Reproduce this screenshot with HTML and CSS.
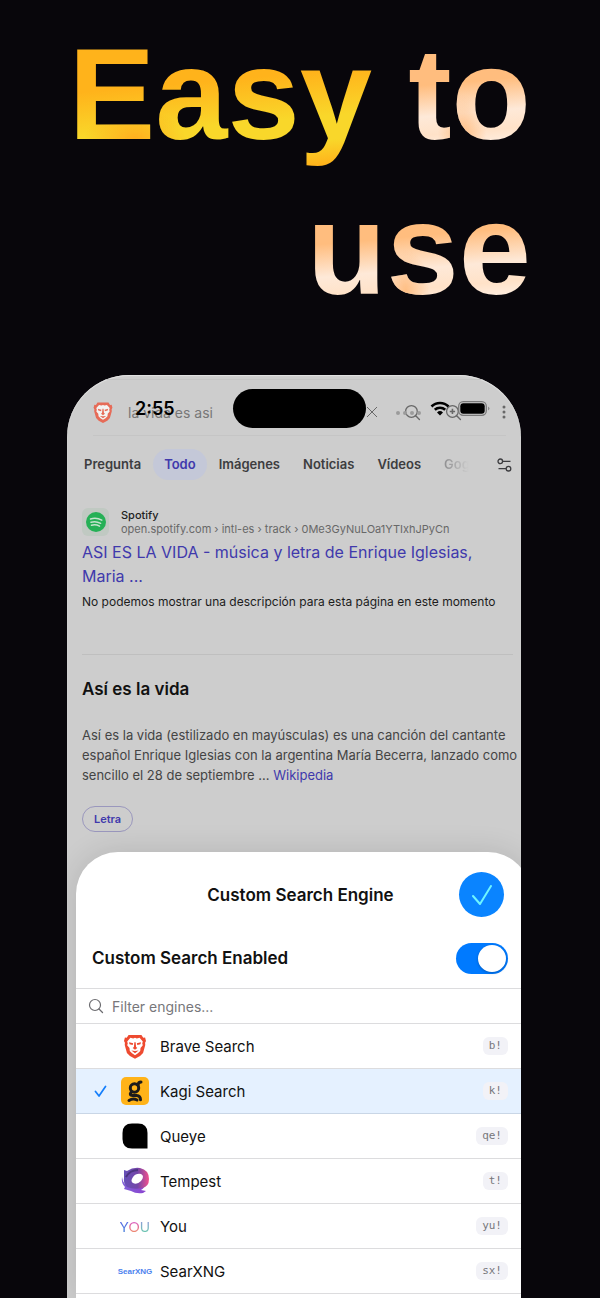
FILE: index.html
```
<!DOCTYPE html>
<html lang="es">

<head>
  <meta charset="UTF-8">
  <meta name="viewport" content="width=device-width, initial-scale=1.0">
  <title>Easy to use</title>
  <link rel="stylesheet" href="styles.css">
</head>

<body>
  <svg class="sprite" width="0" height="0" aria-hidden="true">
    <symbol id="brave" viewBox="0 0 24 28">
      <path fill="#ee4a30" d="M5 2h14l2 3 2-.3 1 3.8-1 2 .2 2.500-2.400 8.500-3.300 3.500L12 28l-5.500-3-3.300-3.500L.8 13 1 10.500 0 8.500l1-3.800L3 5z" />
      <path fill="#fff" d="M7 5l3 .7L12 5l2 .7L17 5l3.500 4-.6 2.300.6 2-2.500 3-.3 3.200-2.500 2.300L12 24l-3.200-2.200-2.500-2.300L6 16.300l-2.500-3 .6-2L3.500 9z" />
      <path fill="#ee4a30" d="M5.500 10l4.500 1-.5 2-3.500-1zM18.500 10L14 11l.5 2 3.500-1zM11.300 10h1.400l.5 5 1.300 1.200L12 18l-2.500-1.800 1.300-1.200zM8 19l4 .5 4-.5-4 3z" />
    </symbol>
    <symbol id="search" viewBox="0 0 16 16">
      <circle cx="7" cy="7" r="5.500" fill="none" stroke="currentColor" stroke-width="1.200" />
      <path d="M11 11l3.500 3.500" stroke="currentColor" stroke-width="1.300" stroke-linecap="round" />
    </symbol>
  </svg>

  <h1 class="headline"><span class="gold">Easy</span> <span class="peach">to</span> <span class="peach">use</span></h1>

  <main class="phone">
    <div class="status-bar">
      <span class="time">2:55</span>
      <span class="island"></span>
      <span class="indicators">
        <span class="signal"><i></i><i></i><i></i><i></i></span>
        <svg class="wifi" viewBox="0 0 20 15">
          <path d="M1.500 5.500a12 12 0 0 1 17 0M4.800 8.800a7.500 7.500 0 0 1 10.400 0" fill="none" stroke="#000" stroke-width="2.600" />
          <path d="M7 11.500a4.300 4.300 0 0 1 6 0l-3 3z" />
        </svg>
        <svg class="battery" viewBox="0 0 32 15">
          <rect x=".7" y=".7" width="27.600" height="13.600" rx="4.500" fill="none" stroke="#7a7a7a" stroke-width="1.300" />
          <rect x="2.300" y="2.300" width="24.400" height="10.400" rx="3" />
          <path d="M30 5.500v4q1.500-.8 1.500-2t-1.500-2z" fill="#8c8c8c" />
        </svg>
      </span>
    </div>

    <form class="search-bar" role="search">
      <svg class="lion"><use href="#brave" /></svg>
      <input type="text" value="la vida es asi" aria-label="Buscar">
      <button type="reset" class="clear" aria-label="Borrar"><svg viewBox="0 0 12 12"><path d="M1 1l10 10M11 1L1 11" stroke="currentColor" /></svg></button>
      <button type="submit" class="tool" aria-label="Buscar"><svg><use href="#search" /></svg></button>
      <button type="button" class="tool ask" aria-label="Preguntar"><svg viewBox="0 0 16 16"><use href="#search" /><path d="M7 4.500v5M4.500 7h5" stroke="currentColor" stroke-width="1.500" /></svg></button>
      <button type="button" class="more" aria-label="Más"><svg viewBox="0 0 4 14" fill="currentColor"><circle cx="2" cy="2" r="1.500" /><circle cx="2" cy="7" r="1.500" /><circle cx="2" cy="12" r="1.500" /></svg></button>
    </form>

    <nav class="tabs">
      <div class="tab-list">
        <a href="#">Pregunta</a>
        <a href="#" class="active">Todo</a>
        <a href="#">Imágenes</a>
        <a href="#">Noticias</a>
        <a href="#">Vídeos</a>
        <a href="#" class="last">Gog</a>
      </div>
      <button type="button" class="filters" aria-label="Filtros"><svg viewBox="0 0 15 14" fill="none" stroke="currentColor" stroke-width="1.300"><circle cx="3.300" cy="3.300" r="2.300" /><path d="M6 3.300h7.500M1.500 10.700H9" /><circle cx="11.500" cy="10.700" r="2.300" /></svg></button>
    </nav>

    <article class="result">
      <div class="site">
        <span class="favicon">
          <svg viewBox="0 0 20 20"><circle cx="10" cy="10" r="10" fill="#25b056" /><path d="M4.500 7q6-1.800 11.300 1.200M5 10.200q5-1.400 9.600 1.100M5.500 13.200q4.300-1.100 8 .9" fill="none" stroke="#c5e2cd" stroke-width="1.500" stroke-linecap="round" /></svg>
        </span>
        <div>
          <div class="site-name">Spotify</div>
          <div class="site-url">open.spotify.com › intl-es › track › 0Me3GyNuLOa1YTIxhJPyCn</div>
        </div>
      </div>
      <a href="#" class="result-title">ASI ES LA VIDA - música y letra de Enrique Iglesias, Maria ...</a>
      <p class="result-text">No podemos mostrar una descripción para esta página en este momento</p>
    </article>

    <section class="infobox">
      <h2>Así es la vida</h2>
      <p>Así es la vida (estilizado en mayúsculas) es una canción del cantante español Enrique Iglesias con la argentina María Becerra, lanzado como sencillo el 28 de septiembre ... <a href="#">Wikipedia</a></p>
      <button type="button" class="chip">Letra</button>
    </section>

    <section class="sheet">
      <header class="sheet-header">
        <h2>Custom Search Engine</h2>
        <button type="button" class="done" aria-label="Done"><svg viewBox="0 0 20 20"><path d="M1 11l7 8L19 1" fill="none" stroke="#6ff5ff" stroke-width="2" stroke-linecap="round" stroke-linejoin="round" /></svg></button>
      </header>
      <div class="toggle-row">
        <label for="enabled">Custom Search Enabled</label>
        <input type="checkbox" id="enabled" class="switch" checked>
      </div>
      <div class="filter-row">
        <svg><use href="#search" /></svg>
        <input type="text" placeholder="Filter engines..." aria-label="Filter engines">
      </div>
      <ul class="engines">
        <li>
          <span class="check"></span>
          <span class="logo"><svg class="logo-brave"><use href="#brave" /></svg></span>
          <span class="name">Brave Search</span>
          <kbd>b!</kbd>
        </li>
        <li class="selected">
          <span class="check"><svg viewBox="0 0 12 12"><path d="M1 6.500L4.500 11 11 1.500" fill="none" stroke="#147efb" stroke-width="1.700" stroke-linecap="round" stroke-linejoin="round" /></svg></span>
          <span class="logo"><svg viewBox="0 0 28 28"><rect width="28" height="28" rx="5" fill="#ffb319" /><g fill="none" stroke="#1d1a1b" stroke-width="3" stroke-linecap="round"><circle cx="13.500" cy="11" r="4.200" /><path d="M17 8q.3-3 3-3M10 15.500q-2 2.700 1.500 3h4q4 .5 4 4.300M8 23.500q4-2.500 8-.5" /></g></svg></span>
          <span class="name">Kagi Search</span>
          <kbd>k!</kbd>
        </li>
        <li>
          <span class="check"></span>
          <span class="logo"><svg viewBox="0 0 28 28"><path d="M11 1.500h6Q26.500 1.500 26.500 11v15.500H11Q1.500 26.500 1.500 17v-6Q1.500 1.500 11 1.500z" /></svg></span>
          <span class="name">Queye</span>
          <kbd>qe!</kbd>
        </li>
        <li>
          <span class="check"></span>
          <span class="logo">
            <svg viewBox="0 0 28 28">
              <defs>
                <linearGradient id="swirl" x1="0" x2="1"><stop offset="0" stop-color="#6650b8" /><stop offset=".55" stop-color="#7446a8" /><stop offset="1" stop-color="#f2508d" /></linearGradient>
                <linearGradient id="tail" x1="0" x2="1"><stop offset="0" stop-color="#8060d8" /><stop offset="1" stop-color="#8b43cf" /></linearGradient>
              </defs>
              <path fill="url(#tail)" d="M1 10q1 8 8 10 9 2 16-5-1 6-5 8l5 1-3 2q-7 1-12-2l-7-2 1-2q-4-4-3-10z" />
              <path fill="url(#swirl)" fill-rule="evenodd" d="M3 3l3 1q6-4 13-3 9 2 9 11 0 8-7 9-8 2-15-1-4-4-3-9zM20 7q-5-1-8 3-3 4 0 6 4 2 8-2 4-5 0-7z" />
              <path d="M5 10q4-7 12-7" fill="none" stroke="#4b347f" stroke-width="2" />
            </svg>
          </span>
          <span class="name">Tempest</span>
          <kbd>t!</kbd>
        </li>
        <li>
          <span class="check"></span>
          <span class="logo logo-you"><span>Y</span><span>O</span><span>U</span></span>
          <span class="name">You</span>
          <kbd>yu!</kbd>
        </li>
        <li>
          <span class="check"></span>
          <span class="logo logo-searx">SearXNG</span>
          <span class="name">SearXNG</span>
          <kbd>sx!</kbd>
        </li>
      </ul>
    </section>
  </main>
</body>

</html>
```
FILE: styles.css
```
* {
  box-sizing: border-box;
}

body {
  margin: 0;
  min-height: 100vh;
  display: flex;
  flex-direction: column;
  background: #08060b;
  font-family: Inter, "Liberation Sans", sans-serif;
  color: #111;
}

h1,
h2,
p,
ul {
  margin: 0;
  padding: 0;
}

a {
  color: #4039ac;
  text-decoration: none;
}

button {
  border: 0;
  padding: 0;
  background: none;
  color: inherit;
  font-family: inherit;
  display: flex;
  align-items: center;
  justify-content: center;
  cursor: pointer;
}

input {
  border: 0;
  padding: 0;
  background: none;
  font-family: inherit;
  min-width: 0;
}

input:focus {
  outline: none;
}

.sprite {
  position: absolute;
}

/* headline */

.headline {
  padding: 17px 69px 0 60px;
  font: bold 130px/155px "Liberation Sans", Arial, sans-serif;
  text-align: right;
}

.gold,
.peach {
  -webkit-background-clip: text;
  background-clip: text;
  color: transparent;
}

.gold {
  background-image:
    radial-gradient(ellipse 50px 30px at 66px 118px, #ffae1f, transparent),
    linear-gradient(175deg, #ffb31b 42%, #f9d72a 68%, #f9d72a 82%, #ffb31b 96%);
}

.peach {
  background-image:
    radial-gradient(ellipse 24px 40px at 44% 114px, #ffbf85, transparent),
    linear-gradient(175deg, #ffbd7e 42%, #fee9d8 62%, #ffe2c8 74%, #fff0e4 84%);
}

/* phone */

.phone {
  position: relative;
  flex: 1;
  display: flex;
  flex-direction: column;
  margin: 48px 79px 0 67px;
  padding-top: 4px;
  border-radius: 62px 62px 0 0;
  background: #cdcdcd;
  box-shadow: inset 0 1px 1px #e4e4e4;
  overflow: hidden;
}

.status-bar {
  position: absolute;
  top: 14px;
  left: 0;
  right: 0;
  z-index: 1;
  height: 39px;
  display: flex;
  align-items: center;
  justify-content: space-between;
  padding: 0 31px 0 68px;
}

.time {
  width: 98px;
  font-size: 18px;
  font-weight: 600;
  color: #000;
}

.island {
  width: 133px;
  height: 39px;
  border-radius: 20px;
  background: #000;
}

.indicators {
  flex: 1;
  display: flex;
  align-items: center;
  justify-content: flex-end;
}

.signal {
  display: flex;
  gap: 3px;
  padding: 8px 9px 0 0;
}

.signal i {
  width: 4px;
  height: 4px;
  border-radius: 2px;
  background: #9b9b9b;
}

.wifi {
  width: 20px;
  height: 15px;
  margin-right: 8px;
}

.battery {
  width: 32px;
  height: 15px;
}

.search-bar {
  display: flex;
  align-items: center;
  height: 57px;
  margin: 0 15px 0 26px;
  padding-top: 9px;
  border-top: 1px solid #c5c5c5;
  border-bottom: 1px solid #c5c5c5;
  color: #686868;
}

.search-bar input {
  flex: 1;
  margin-left: 15px;
  font-size: 14px;
  color: #777;
}

.lion {
  width: 20px;
  height: 22px;
  opacity: 0.75;
}

.clear svg {
  width: 12px;
  height: 12px;
}

.clear {
  margin-right: 26px;
}

.tool {
  margin-right: 24px;
}

.tool svg {
  width: 17px;
  height: 17px;
}

.ask {
  margin-right: 40px;
}

.more svg {
  width: 4px;
  height: 14px;
}

.tabs {
  display: flex;
  align-items: center;
  margin: 13px 9px 0 6px;
}

.tab-list {
  flex: 1;
  display: flex;
  gap: 1px;
}

.tab-list a {
  padding: 0 11px;
  border-radius: 16px;
  font-size: 13px;
  line-height: 31px;
  font-weight: 600;
  color: #3d3d40;
}

.tab-list .active {
  background: #c4c8d8;
  color: #4039ac;
}

.tab-list .last {
  background: linear-gradient(90deg, #8c8c8e 20%, #cdcdcd 75%);
  -webkit-background-clip: text;
  background-clip: text;
  color: transparent;
}

.filters {
  color: #3d3d40;
}

.filters svg {
  width: 15px;
  height: 14px;
}

.result {
  margin: 28px 0 0 15px;
}

.site {
  display: flex;
  align-items: center;
  gap: 12px;
  font-size: 11px;
  line-height: 14px;
}

.favicon {
  width: 27px;
  height: 28px;
  border-radius: 6px;
  background: #c0c9c2;
  display: flex;
  align-items: center;
  justify-content: center;
}

.favicon svg {
  width: 20px;
  height: 20px;
}

.site-name {
  font-weight: 500;
  color: #222;
}

.site-url {
  color: #686868;
}

.result-title {
  display: block;
  margin: 4px 32px 0 0;
  font-size: 16px;
  line-height: 24px;
}

.result-text {
  margin-top: 4px;
  font-size: 12px;
  line-height: 20px;
  color: #1c1c1c;
}

.infobox {
  margin: 42px 8px 0 15px;
  padding-top: 22px;
  border-top: 1px solid #bfbfbf;
}

.infobox h2 {
  font-size: 17px;
  line-height: 24px;
  font-weight: 600;
}

.infobox p {
  margin: 24px -8px 0 0;
  font-size: 13px;
  line-height: 20px;
  color: #444;
}

.chip {
  height: 26px;
  margin-top: 21px;
  padding: 0 11px;
  border: 1px solid #9a97bd;
  border-radius: 13px;
  font-size: 11px;
  font-weight: 600;
  color: #4039ac;
}

/* bottom sheet, runs a little past the right edge of the screen */

.sheet {
  flex: 1;
  margin: 20px -9px 0 9px;
  padding-right: 9px;
  border-radius: 42px 42px 0 0;
  background: #fff;
  box-shadow: 0 0 30px rgba(0, 0, 0, 0.12);
}

.sheet-header {
  display: grid;
  grid-template-columns: 45px 1fr 45px;
  align-items: center;
  padding: 20px 17px 0 21px;
}

.sheet-header h2 {
  grid-column: 2;
  text-align: center;
  font-size: 17px;
  font-weight: 600;
  line-height: 24px;
}

.done {
  width: 45px;
  height: 45px;
  border-radius: 50%;
  background: #0a84ff;
}

.done svg {
  width: 20px;
  height: 20px;
}

.toggle-row {
  display: flex;
  align-items: center;
  justify-content: space-between;
  height: 71px;
  padding: 11px 13px 0 16px;
  font-size: 17px;
  font-weight: 600;
}

.switch {
  appearance: none;
  width: 52px;
  height: 31px;
  margin: 0;
  padding: 2px;
  border-radius: 16px;
  background: #c7c7cc;
  display: flex;
}

.switch::before {
  content: "";
  width: 28px;
  height: 27px;
  border-radius: 50%;
  background: #fff;
  box-shadow: 0 1px 3px rgba(0, 0, 0, 0.25);
}

.switch:checked {
  justify-content: flex-end;
  background: #007aff;
}

.filter-row {
  display: flex;
  align-items: center;
  gap: 8px;
  height: 36px;
  padding-left: 12px;
  border-top: 1px solid #dcdcde;
  border-bottom: 1px solid #dcdcde;
  color: #6c6c70;
}

.filter-row svg {
  width: 16px;
  height: 16px;
}

.filter-row input {
  flex: 1;
  font-size: 14px;
}

.filter-row input::placeholder {
  color: #77777b;
}

.engines {
  list-style: none;
  padding-bottom: 4px;
}

.engines li {
  display: flex;
  align-items: center;
  height: 45px;
  padding: 0 13px 0 18px;
  border-bottom: 1px solid #dcdcde;
}

.engines .selected {
  background: #e5f1ff;
  border-color: #c9d6e6;
}

.check {
  width: 27px;
  display: flex;
}

.check svg {
  width: 13px;
  height: 12px;
}

.logo {
  width: 28px;
  height: 28px;
  margin-right: 11px;
  display: flex;
  align-items: center;
  justify-content: center;
}

.logo svg {
  width: 28px;
  height: 28px;
}

.logo .logo-brave {
  width: 22px;
  height: 26px;
}

.logo-you {
  font: 14px Lato, sans-serif;
}

.logo-you span {
  background: linear-gradient(#5f63e8, #4286d8);
  -webkit-background-clip: text;
  background-clip: text;
  color: transparent;
}

.logo-you span:nth-child(2) {
  background-image: linear-gradient(#d045e0, #f59a58);
}

.logo-you span:nth-child(3) {
  background-image: linear-gradient(#9c90e6, #62d3a5);
}

.logo-searx {
  font: bold 8px "Liberation Sans Narrow", "Liberation Sans", sans-serif;
  color: #4c82ee;
}

.name {
  flex: 1;
  font-size: 15px;
}

kbd {
  padding: 0 6px;
  border-radius: 6px;
  background: #f2f2f7;
  font: 11px/18px "DejaVu Sans Mono", monospace;
  color: #77777b;
}
```
